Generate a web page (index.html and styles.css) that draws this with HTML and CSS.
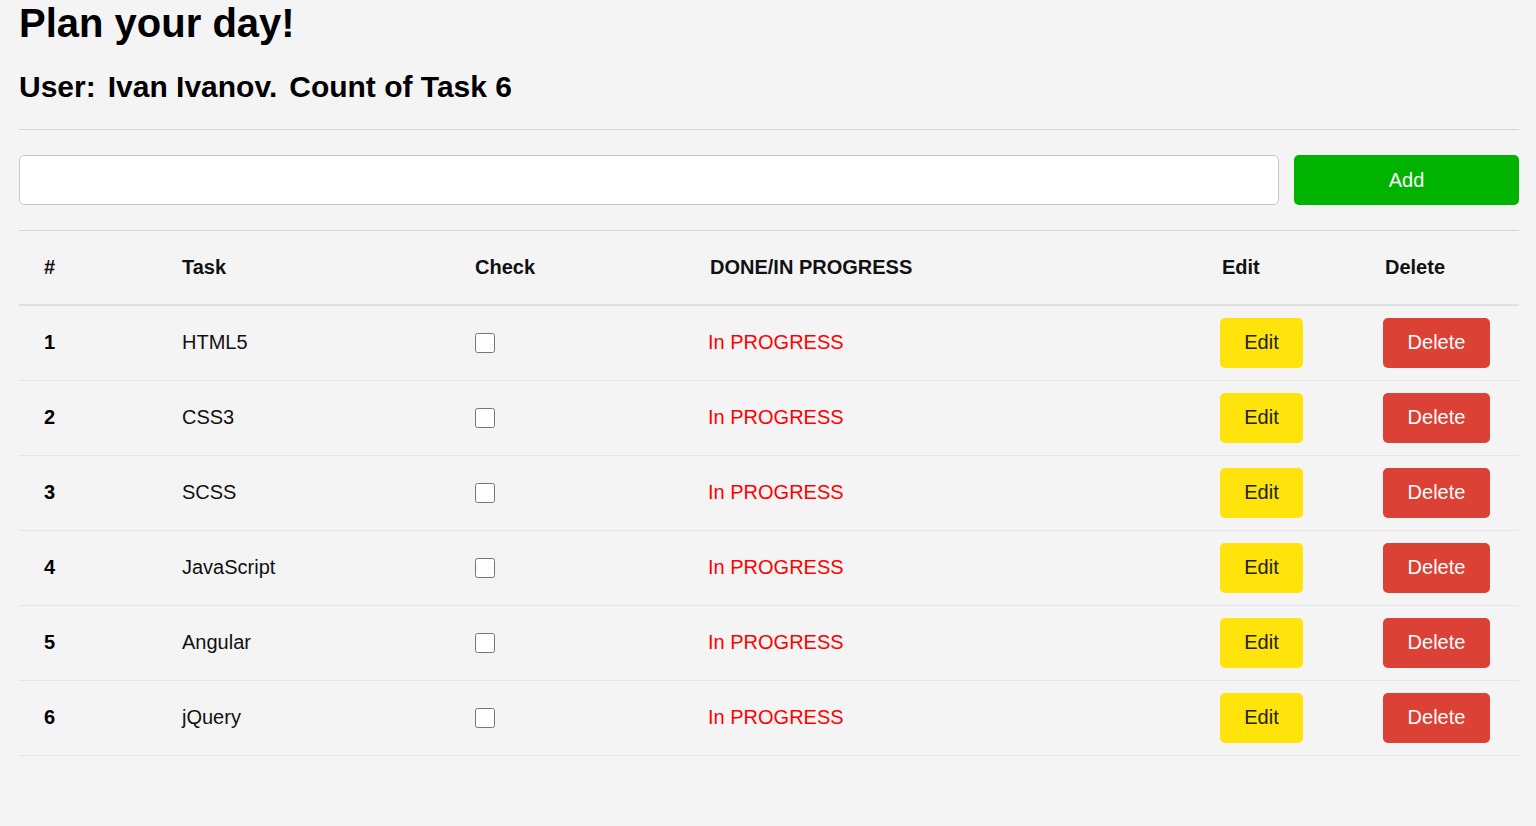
FILE: index.html
```html
<!DOCTYPE html>
<html lang="en">
<head>
<meta charset="utf-8">
<title>Plan your day!</title>
<link rel="stylesheet" href="styles.css">
</head>
<body>
<div class="container">
  <h1 class="title">Plan your day!</h1>
  <h2 class="subtitle"><span>User:</span><span>Ivan Ivanov.</span><span>Count of Task 6</span></h2>
  <hr class="divider">
  <form class="add-form">
    <input class="add-input" type="text">
    <button class="add-btn" type="button">Add</button>
  </form>
  <table class="tasks">
    <colgroup>
      <col class="c1"><col class="c2"><col class="c3"><col class="c4"><col class="c5"><col class="c6">
    </colgroup>
    <thead>
      <tr><th>#</th><th>Task</th><th>Check</th><th class="th-status">DONE/IN PROGRESS</th><th class="th-btn">Edit</th><th class="th-btn">Delete</th></tr>
    </thead>
    <tbody>
      <tr><td class="num">1</td><td>HTML5</td><td><input class="check" type="checkbox"></td><td class="status">In PROGRESS</td><td><button class="btn edit">Edit</button></td><td><button class="btn del">Delete</button></td></tr>
      <tr><td class="num">2</td><td>CSS3</td><td><input class="check" type="checkbox"></td><td class="status">In PROGRESS</td><td><button class="btn edit">Edit</button></td><td><button class="btn del">Delete</button></td></tr>
      <tr><td class="num">3</td><td>SCSS</td><td><input class="check" type="checkbox"></td><td class="status">In PROGRESS</td><td><button class="btn edit">Edit</button></td><td><button class="btn del">Delete</button></td></tr>
      <tr><td class="num">4</td><td>JavaScript</td><td><input class="check" type="checkbox"></td><td class="status">In PROGRESS</td><td><button class="btn edit">Edit</button></td><td><button class="btn del">Delete</button></td></tr>
      <tr><td class="num">5</td><td>Angular</td><td><input class="check" type="checkbox"></td><td class="status">In PROGRESS</td><td><button class="btn edit">Edit</button></td><td><button class="btn del">Delete</button></td></tr>
      <tr><td class="num">6</td><td>jQuery</td><td><input class="check" type="checkbox"></td><td class="status">In PROGRESS</td><td><button class="btn edit">Edit</button></td><td><button class="btn del">Delete</button></td></tr>
    </tbody>
  </table>
</div>
</body>
</html>
```

FILE: styles.css
```css
* { box-sizing: border-box; }

html, body {
  margin: 0;
  padding: 0;
  background: #f4f4f4;
  font-family: "Liberation Sans", Arial, sans-serif;
  color: #111;
}

.container {
  width: 1500px;
  margin: 0 0 0 19px;
}

.title {
  margin: 0;
  font-size: 40px;
  font-weight: bold;
  line-height: 46px;
  color: #000;
}

.subtitle {
  display: flex;
  gap: 12px;
  margin: 23px 0 0;
  font-size: 30px;
  font-weight: bold;
  line-height: 35px;
  color: #000;
}

.divider {
  margin: 25px 0 0;
  border: 0;
  border-top: 1px solid #d6d6d6;
  height: 0;
}

.add-form {
  display: flex;
  gap: 15px;
  margin-top: 25px;
}

.add-input {
  flex: 1;
  height: 50px;
  margin: 0;
  background: #fff;
  border: 1px solid #c8c8c8;
  border-radius: 5px;
  font-family: inherit;
  font-size: 20px;
  padding: 0 12px;
}

.add-btn {
  width: 225px;
  height: 50px;
  margin: 0;
  border: 0;
  border-radius: 5px;
  background: #00b300;
  color: #fff;
  font-family: inherit;
  font-size: 20px;
}

.tasks {
  width: 1500px;
  margin-top: 25px;
  border-collapse: collapse;
  table-layout: fixed;
  border-top: 1px solid #d6d6d6;
}

.c1 { width: 138px; }
.c2 { width: 293px; }
.c3 { width: 233px; }
.c4 { width: 512px; }
.c5 { width: 163px; }
.c6 { width: 161px; }

.tasks th {
  height: 74px;
  padding: 0 0 0 25px;
  text-align: left;
  font-size: 20px;
  font-weight: bold;
  color: #111;
  border-bottom: 2px solid #e0e0e0;
  vertical-align: middle;
}

.tasks th.th-status {
  padding-left: 27px;
}

.tasks th.th-btn {
  padding-left: 27px;
}

.tasks td {
  height: 75px;
  padding: 12px 0 12px 25px;
  font-size: 20px;
  color: #111;
  border-bottom: 1px solid #e6e6e6;
  vertical-align: middle;
}

.tasks td.num {
  font-weight: bold;
  color: #000;
}

.tasks td.status {
  color: #ff0000;
}

.check {
  display: block;
  width: 20px;
  height: 20px;
  margin: 0;
}

.btn {
  display: block;
  height: 50px;
  margin: 0;
  border: 0;
  border-radius: 5px;
  font-family: inherit;
  font-size: 20px;
  padding: 0;
}

.btn.edit {
  width: 83px;
  background: #ffe30a;
  color: #222;
}

.btn.del {
  width: 107px;
  background: #dc4135;
  color: #fff;
}
```
